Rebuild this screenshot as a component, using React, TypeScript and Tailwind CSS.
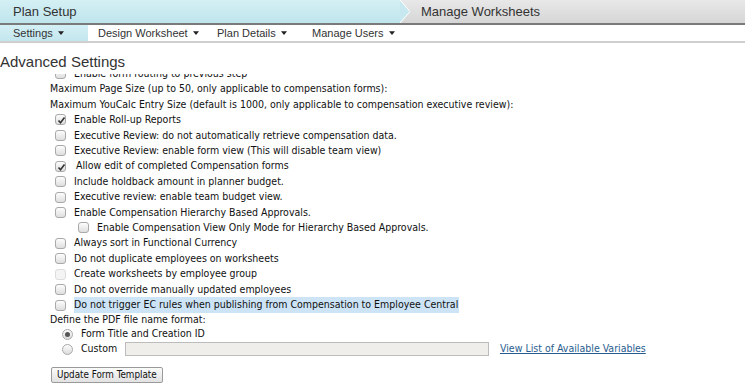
import React from "react";

const body = { fontFamily: '"DejaVu Sans Condensed", "DejaVu Sans", sans-serif' };
const arial = { fontFamily: '"Liberation Sans", Arial, sans-serif' };

function Box({ checked, disabled }: { checked?: boolean; disabled?: boolean }) {
  return (
    <span
      className={`relative inline-block w-[11px] h-[11px] rounded-[3px] border shrink-0 ${
        disabled ? "border-[#dcdcdc] bg-[#f4f4f4]" : "border-[#a9a9a9] bg-gradient-to-b from-[#fdfdfd] to-[#dedede]"
      }`}
    >
      {checked && (
        <svg viewBox="0 0 11 11" className="absolute left-0 top-0 w-[11px] h-[11px]">
          <path d="M2.5 5.5 L4.5 7.8 L8.5 2.5" stroke="#333" strokeWidth="1.6" fill="none" />
        </svg>
      )}
    </span>
  );
}

function Radio({ checked }: { checked?: boolean }) {
  return (
    <span className="relative inline-flex items-center justify-center w-[11px] h-[11px] rounded-full border border-[#a9a9a9] bg-gradient-to-b from-[#fdfdfd] to-[#dcdcdc] shrink-0">
      {checked && <span className="w-[5px] h-[5px] rounded-full bg-[#555]" />}
    </span>
  );
}

function Row({
  label,
  checked,
  disabled,
  indent,
  highlight,
  gap = "gap-[8px]",
}: {
  label: string;
  checked?: boolean;
  disabled?: boolean;
  indent?: boolean;
  highlight?: boolean;
  gap?: string;
}) {
  return (
    <div className={`flex items-center h-[15.43px] ${gap} ${indent ? "pl-[78px]" : "pl-[55px]"}`}>
      <Box checked={checked} disabled={disabled} />
      <span className={highlight ? "bg-[#cde4f7] pr-[1px]" : ""}>{label}</span>
    </div>
  );
}

function Caret() {
  return (
    <svg viewBox="0 0 8 5" className="w-[6px] h-[4px] ml-[5px]">
      <path d="M0 0 H8 L4 5 Z" fill="#222" />
    </svg>
  );
}

export default function App() {
  return (
    <div className="w-[745px] h-[384px] overflow-hidden bg-white text-[#222]">
      {/* breadcrumb */}
      <div className="flex h-[23px] bg-gradient-to-b from-[#e8e8e8] to-[#d6d6d6]" style={arial}>
        <div className="flex w-[400px] items-center pl-[13px] bg-gradient-to-b from-[#d4f0f5] to-[#bfe4ec] text-[13px] text-[#333]">
          Plan Setup
        </div>
        <svg viewBox="0 0 10 23" className="w-[10px] h-[23px]" preserveAspectRatio="none">
          <path d="M0 0 L10 11.5 L0 23 Z" fill="#c8e8ef" />
          <path d="M0 0 L10 11.5 L0 23" fill="none" stroke="#ffffff" strokeWidth="1" />
        </svg>
        <div className="flex items-center pl-[11px] text-[13px] text-[#333]">Manage Worksheets</div>
      </div>
      <div className="h-[2px] bg-[#7a7a7a]" />
      {/* nav */}
      <div className="flex h-[18px] text-[11px] text-[#333] border-b-2 border-[#cfcfcf]" style={arial}>
        <div className="flex items-center w-[88px] pl-[13px] bg-gradient-to-b from-[#d4f0f5] to-[#c3e6ee]">
          Settings
          <Caret />
        </div>
        <div className="flex items-center pl-[10px] w-[129px]">
          Design Worksheet
          <Caret />
        </div>
        <div className="flex items-center w-[95px]">
          Plan Details
          <Caret />
        </div>
        <div className="flex items-center">
          Manage Users
          <Caret />
        </div>
      </div>

      <div className="pt-[10px] text-[15px] leading-[18px] text-[#333]" style={arial}>
        Advanced Settings
      </div>

      <div className="mt-[3px] h-[340px] overflow-hidden text-[10.5px] text-[#111]" style={body}>
        <div className="-mt-[8px]">
          <Row label="Enable form routing to previous step" />
          <div className="pl-[50px] h-[15.43px] flex items-center">
            Maximum Page Size (up to 50, only applicable to compensation forms):
          </div>
          <div className="pl-[50px] h-[15.43px] flex items-center">
            Maximum YouCalc Entry Size (default is 1000, only applicable to compensation executive review):
          </div>
          <Row label="Enable Roll-up Reports" checked />
          <Row label="Executive Review: do not automatically retrieve compensation data." />
          <Row label="Executive Review: enable form view (This will disable team view)" />
          <Row label="Allow edit of completed Compensation forms" checked gap="gap-[10px]" />
          <Row label="Include holdback amount in planner budget." />
          <Row label="Executive review: enable team budget view." />
          <Row label="Enable Compensation Hierarchy Based Approvals." />
          <Row label="Enable Compensation View Only Mode for Hierarchy Based Approvals." indent />
          <Row label="Always sort in Functional Currency" />
          <Row label="Do not duplicate employees on worksheets" />
          <Row label="Create worksheets by employee group" disabled />
          <Row label="Do not override manually updated employees" />
          <Row label="Do not trigger EC rules when publishing from Compensation to Employee Central" highlight />
          <div className="pl-[50px] h-[14px] flex items-center">Define the PDF file name format:</div>
          <div className="flex items-center h-[15px] pl-[62px] gap-[8px]">
            <Radio checked />
            <span>Form Title and Creation ID</span>
          </div>
          <div className="flex items-center h-[15px] pl-[62px]">
            <Radio />
            <span className="ml-[8px] w-[44px]">Custom</span>
            <div className="w-[364px] h-[14px] border border-[#bcbcbc] bg-[#efeeea]" />
            <a className="ml-[11px] text-[#2a5d8f] underline">View List of Available Variables</a>
          </div>
          <div className="pl-[51px] mt-[10px]">
            <button className="h-[16px] px-[5px] border border-[#9a9a9a] rounded-[2px] bg-gradient-to-b from-[#fbfbfb] to-[#e2e2e2] text-[9.8px] leading-[14px] text-[#111]">
              Update Form Template
            </button>
          </div>
        </div>
      </div>
    </div>
  );
}
